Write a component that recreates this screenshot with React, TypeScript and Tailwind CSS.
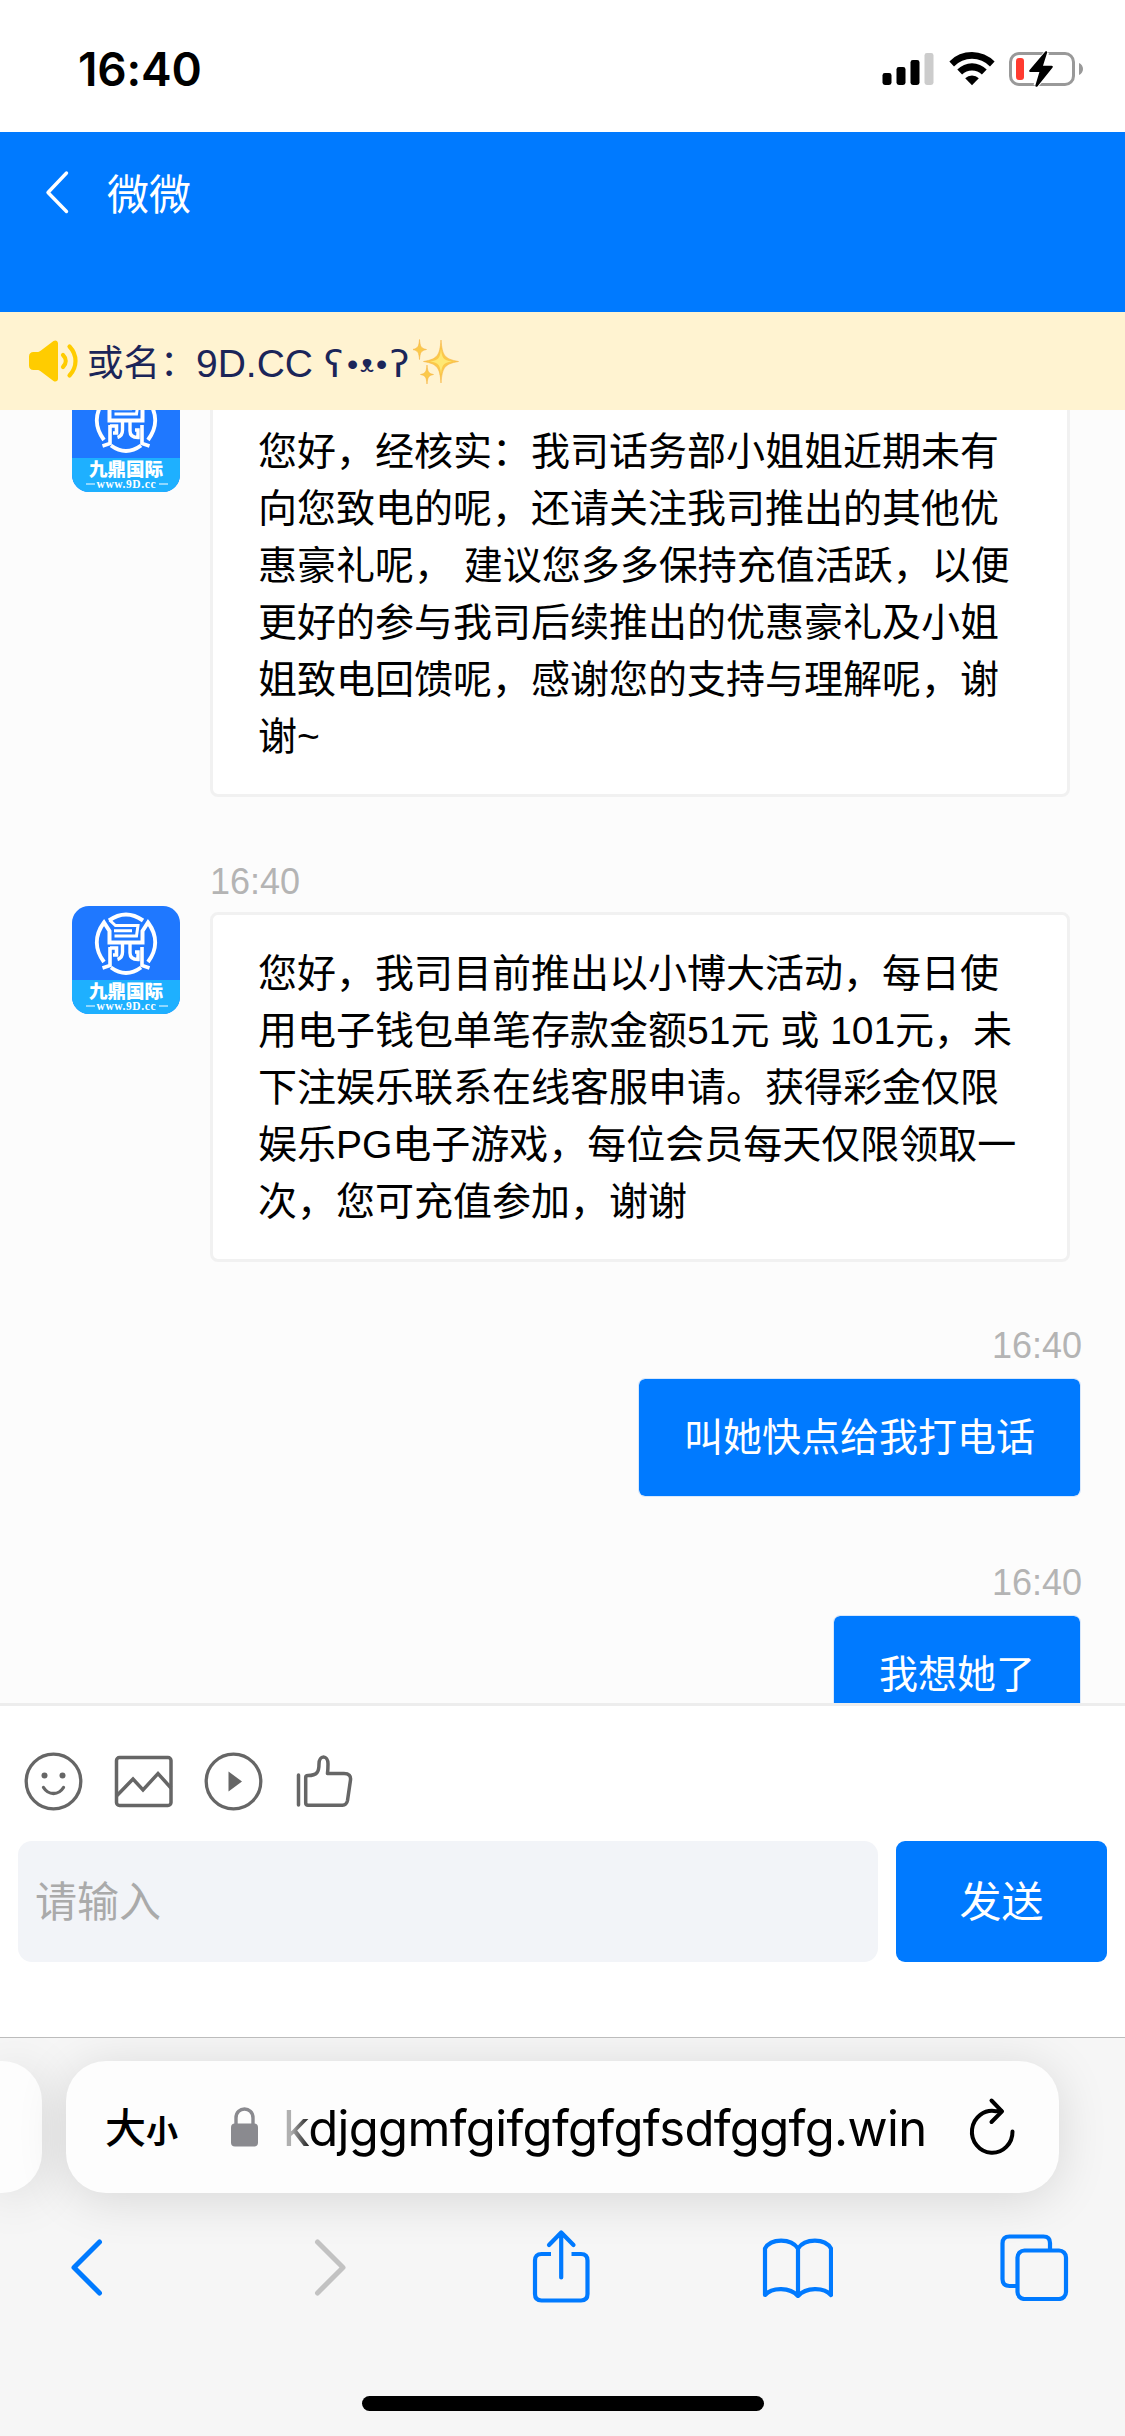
import React from "react";

const SANS = "font-['Liberation_Sans','Noto_Sans_CJK_SC',sans-serif]";

function StatusBar() {
  return (
    <div className="flex h-[132px] shrink-0 items-start justify-between bg-white pl-[78px] pr-[41px] pt-[50px]">
      <div className="font-['Inter',sans-serif] text-[46px] font-semibold leading-[38px] tracking-[-0.2px] text-black">16:40</div>
      <div className="flex items-start">
        <svg className="mt-px" width="52" height="36" viewBox="0 0 52 36">
          <rect x="0.5" y="22" width="9" height="12" rx="2.4" />
          <rect x="14.5" y="16" width="9" height="18" rx="2.4" />
          <rect x="28.5" y="9" width="9" height="25" rx="2.4" />
          <rect x="42.5" y="2" width="9" height="32" rx="2.4" fill="#cccccc" />
        </svg>
        <svg className="ml-[15px]" width="46" height="36" viewBox="0 0 46 36">
          <path d="M0.4 11.4a31.5 31.5 0 0 1 45.2 0.1l-4.6 5a25 25 0 0 0-36 0z" />
          <path d="M8.3 19.5a20.6 20.6 0 0 1 29.4 0l-4.8 5a14 14 0 0 0-19.8 0z" />
          <path d="M16.2 28.2a9.6 9.6 0 0 1 13.6 0L23 35.2z" />
        </svg>
        <svg className="ml-[13px]" width="76" height="38" viewBox="0 0 76 38">
          <rect x="2.5" y="3.5" width="63" height="31" rx="8.5" fill="none" stroke="#999" strokeWidth="3" />
          <rect x="8" y="8" width="8" height="22" rx="3" fill="#ff3b30" />
          <path d="M71 13c2.6 1 4 3.5 4 6s-1.400 5-4 6z" fill="#999" />
          <path d="M38.500 2.500L24 20.500h8l-4 15L44.500 17h-9z" fill="#fff" stroke="#fff" strokeWidth="5" />
          <path d="M37.300 1.600c1.200-.9 2.200-.2 1.800 1.200L35 15.800h8.600c1.400 0 1.600 1 .8 2L29.600 36.300c-1 1-2.600.5-2.200-1L31.400 22h-9c-1.300 0-1.600-1-.8-2z" />
        </svg>
      </div>
    </div>
  );
}

function Notice() {
  return (
    <div className="flex h-[98px] shrink-0 items-center overflow-hidden bg-[#fff3d1] pl-[29px]">
      <svg width="50" height="42" viewBox="0 0 50 42" fill="#ffcc00">
        <path d="M4.500 12H8c1.500 0 2.500-.4 3.600-1.300L24.500 1C26.500-.4 29 .8 29 3.200v35.600c0 2.400-2.500 3.600-4.500 2.200L11.600 31.300C10.500 30.400 9.500 30 8 30H4.500C1.700 30 0 28.300 0 25.500v-9C0 13.700 1.700 12 4.500 12z" />
        <path d="M34 15c3.600 3.600 3.600 8.400 0 12M40.500 6.500c8 8.500 8 20.500 0 29" fill="none" stroke="#ffcc00" strokeWidth="4.200" strokeLinecap="round" />
      </svg>
      <div className="ml-[8px] flex items-center whitespace-pre pt-[6px] text-[36.500px] leading-[56px] text-[#1b2559]">
        <span className="w-[109px]">或名：</span>
        <span className="w-[128px] text-[39px]">9D.CC</span>
        <span className="flex w-[89px] items-center font-['DejaVu_Sans',sans-serif]">
          <span className="w-[23px] text-[38px]">ʕ</span>
          <span className="w-[11px] font-['Liberation_Sans',sans-serif] text-[32px]">•</span>
          <span className="w-[18px] text-center text-[23px]">ᴥ</span>
          <span className="w-[14px] font-['Liberation_Sans',sans-serif] text-[32px]">•</span>
          <span className="text-[38px]">ʔ</span>
        </span>
        <svg className="-mt-[4px]" width="46" height="48" viewBox="0 0 46 48">
          <g fill="#fbc94a" stroke="#f7b545" strokeWidth="0.6">
            <path d="M28 2c1.300 15 3 19 17.500 21.500C31 26 29.300 30 28 45c-1.300-15-3-19-17.500-21.500C25 21 26.700 17 28 2z" />
            <path d="M6.500 1.500c.6 7 1.500 9 7 10-5.500 1-6.400 3-7 10-.6-7-1.500-9-7-10 5.500-1 6.400-3 7-10z" />
            <path d="M14 27c.6 6.500 1.300 8.500 6.500 9.500-5.200 1-5.900 3-6.500 9.500-.6-6.500-1.300-8.500-6.500-9.500 5.200-1 5.900-3 6.500-9.500z" />
          </g>
          <path d="M28 11c.8 8.500 2 11.300 11 12.500-9 1.200-10.200 4-11 12.500-.8-8.500-2-11.300-11-12.500 9-1.200 10.200-4 11-12.500z" fill="#ffe873" />
        </svg>
      </div>
    </div>
  );
}

function Avatar() {
  return (
    <svg className="shrink-0" width="108" height="108" viewBox="0 0 108 108">
      <defs>
        <clipPath id="av"><rect width="108" height="108" rx="17" /></clipPath>
      </defs>
      <g clipPath="url(#av)">
        <rect width="108" height="108" fill="#1f78ff" />
        <rect y="74" width="108" height="34" fill="#1eb0ff" />
      </g>
      <g fill="none" stroke="#fff" strokeWidth="4">
        <path d="M37 14.500Q54 2.500 71 14.500" />
        <path d="M39 61.500Q54 72.500 69 61.500" />
        <path d="M32 56C23 44 22 30 32 16.500L37.500 25V36.500H70.500V25L76 16.500C86 30 85 44 76 56" />
        <path d="M37.500 14L43.500 19.500H66L64.500 30H42.500M42 24.800H60" strokeWidth="3" />
        <path d="M50.500 38v8q0 6-5 7.500M58 38v9q0 6.500 8 6.500V46h-3" strokeWidth="3.400" />
        <path d="M38 42h6.500v7H41M38 41V59.500L30.500 62M70 41V59.500L77.500 62" strokeWidth="3.600" />
      </g>
      <text x="54" y="92" textAnchor="middle" textLength="74" fill="#fff" className="font-['Noto_Sans_CJK_SC',sans-serif] text-[18.500px] font-black">九鼎国际</text>
      <text x="54" y="103.500" textAnchor="middle" textLength="59" fill="#fff" className="font-['Liberation_Serif',serif] text-[11.500px] font-bold">www.9D.cc</text>
      <path d="M14 100h9M87 100h9" stroke="#fff" strokeWidth="1" />
    </svg>
  );
}

function Incoming({ lines }: { lines: string[] }) {
  return (
    <div className="flex items-start pl-[72px]">
      <Avatar />
      <div className="ml-[30px] mt-[6px] w-[860px] rounded-[8px] border-[3px] border-[#f1f1f1] bg-white px-[45px] pb-[29px] pt-[30px] text-[39px] leading-[57px] text-black">
        {lines.map((line) => (
          <div key={line} className="whitespace-pre">{line}</div>
        ))}
      </div>
    </div>
  );
}

function Outgoing({ text }: { text: string }) {
  return (
    <div className="flex flex-col items-end pr-[43px]">
      <div className="h-[54px] text-[36px] leading-[54px] text-[#b4b4b4]">16:40</div>
      <div className="mr-px mt-[5px] flex h-[119px] items-center rounded-[7px] border border-[#d9e8fb] bg-[#007aff] bg-clip-padding px-[45px] text-[39px] leading-[57px] text-white">
        {text}
      </div>
    </div>
  );
}

function Chat() {
  return (
    <div className="flex h-[1293px] shrink-0 flex-col overflow-hidden bg-[#fcfcfc]">
      <div className="-mt-[26px]">
        <Incoming
          lines={[
            "您好，经核实：我司话务部小姐姐近期未有",
            "向您致电的呢，还请关注我司推出的其他优",
            "惠豪礼呢， 建议您多多保持充值活跃，以便",
            "更好的参与我司后续推出的优惠豪礼及小姐",
            "姐致电回馈呢，感谢您的支持与理解呢，谢",
            "谢~",
          ]}
        />
      </div>
      <div className="ml-[210px] mt-[57px] h-[52px] text-[36px] leading-[55px] text-[#b4b4b4]">16:40</div>
      <Incoming
        lines={[
          "您好，我司目前推出以小博大活动，每日使",
          "用电子钱包单笔存款金额51元 或 101元，未",
          "下注娱乐联系在线客服申请。获得彩金仅限",
          "娱乐PG电子游戏，每位会员每天仅限领取一",
          "次，您可充值参加，谢谢",
        ]}
      />
      <div className="mt-[57px] flex flex-col gap-[59px]">
        <Outgoing text="叫她快点给我打电话" />
        <Outgoing text="我想她了" />
      </div>
    </div>
  );
}

function Composer() {
  return (
    <div className="flex h-[334px] shrink-0 flex-col border-t-[3px] border-[#ededed] bg-white pl-[18px] pr-[18px] pt-[46px]">
      <div className="flex h-[60px] items-center gap-[30px] pl-[5px]">
        <svg width="60" height="60" viewBox="0 0 60 60" fill="none" stroke="#666" strokeWidth="3.300">
          <circle cx="30.500" cy="29.500" r="27.300" />
          <path d="M20.500 35.500c5 8 15 8 20 0" strokeLinecap="round" />
          <circle cx="21.500" cy="23.500" r="3" fill="#666" stroke="none" />
          <circle cx="39.500" cy="23.500" r="3" fill="#666" stroke="none" />
        </svg>
        <svg width="60" height="60" viewBox="0 0 60 60" fill="none" stroke="#666" strokeWidth="3.500">
          <rect x="3.500" y="5.500" width="54.500" height="48" rx="3" />
          <path d="M4 43.500L20 27l10 11 15-16.500L58 36" />
        </svg>
        <svg width="60" height="60" viewBox="0 0 60 60" fill="none" stroke="#666" strokeWidth="3.300">
          <circle cx="30.500" cy="29.500" r="27.300" />
          <path d="M25.500 19.500L39 29.500l-13.500 10z" fill="#666" stroke="none" />
        </svg>
        <svg width="60" height="60" viewBox="0 0 60 60" fill="none" stroke="#666" strokeWidth="3.500" strokeLinejoin="round">
          <path d="M5.500 23V53" strokeLinecap="round" />
          <path d="M12.700 25.500Q12.700 23.500 15 23.500C24 23.500 26 20 26 12C26 2.500 35 2.500 35 12Q35 17 34.500 21.500H51C56 21.500 58 24 57.500 28L54.500 48.500Q53.500 53.200 49.500 53.200H15Q12.700 53.200 12.700 51Z" />
        </svg>
      </div>
      <div className="mt-[29px] flex h-[121px] gap-[18px]">
        <div className="flex flex-1 items-center rounded-[14px] bg-[#f2f4f8] pl-[17px] pt-[2px] text-[42px] leading-[60px] text-[#aaaaaa]">请输入</div>
        <div className="flex w-[211px] items-center justify-center rounded-[9px] bg-[#007aff] pt-[2px] text-[42px] leading-[60px] text-white">发送</div>
      </div>
    </div>
  );
}

function BrowserBar() {
  return (
    <div className="relative flex h-[399px] shrink-0 flex-col overflow-hidden border-t border-[#bcbcbc] bg-[#f6f6f6]">
      <div className="mt-[23px] flex h-[132px] items-stretch gap-[24px]">
        <div className="w-[42px] shrink-0 rounded-r-[40px] bg-[#fdfdfd] shadow-[0_6px_50px_rgba(0,0,0,0.13)]" />
        <div className="flex w-[993px] shrink-0 items-center rounded-[40px] bg-[#fdfdfd] pl-[39px] shadow-[0_6px_50px_rgba(0,0,0,0.13)]">
          <div className="flex w-[126px] items-baseline font-['Noto_Sans_CJK_SC',sans-serif] leading-[60px] text-black">
            <span className="text-[41px] font-medium">大</span>
            <span className="text-[32px] font-bold">小</span>
          </div>
          <svg width="27" height="40" viewBox="0 0 27 40">
            <rect y="16.500" width="27" height="23" rx="4" fill="#8a8a8f" />
            <path d="M5 18V11C5 -1 22 -1 22 11v7" fill="none" stroke="#8a8a8f" strokeWidth="3.400" />
          </svg>
          <div className="ml-[25px] w-[645px] whitespace-nowrap pt-[3px] font-['Inter',sans-serif] text-[49px] leading-[60px] tracking-[-0.650px] text-black [mask-image:linear-gradient(90deg,rgba(0,0,0,0.3)_8px,#000_30px)]">
            kdjggmfgifgfgfgfsdfggfg.win
          </div>
          <svg className="-mt-[3px] ml-[38px]" width="54" height="60" viewBox="0 0 54 60" fill="none" stroke="#000" strokeWidth="4" strokeLinecap="round" strokeLinejoin="round">
            <path d="M46.500 35.500A20.300 21 0 1 1 30 15.200Q33 14.700 35.500 15.300" />
            <path d="M25.500 4.500L36 15.300 25.500 26" />
          </svg>
        </div>
      </div>
      <div className="mt-[36px] flex h-[76px] items-center justify-between pl-[68px] pr-[55px]">
        <svg width="36" height="60" viewBox="0 0 36 60" fill="none" stroke="#007aff" strokeWidth="5" strokeLinecap="round" strokeLinejoin="round">
          <path d="M31.500 5L6 30.500 31.500 56" />
        </svg>
        <svg className="ml-[42px]" width="36" height="60" viewBox="0 0 36 60" fill="none" stroke="#c2c2c2" strokeWidth="5" strokeLinecap="round" strokeLinejoin="round">
          <path d="M5.500 5L31 30.500 5.500 56" />
        </svg>
        <svg className="ml-[18px]" width="60" height="76" viewBox="0 0 60 76" fill="none" stroke="#007aff" strokeWidth="4.200">
          <path d="M20 25H10.500Q4 25 4 31.500V65Q4 71.500 10.500 71.500H50Q56.500 71.500 56.500 65V31.500Q56.500 25 50 25H40.500" />
          <path d="M30.200 48.500V4M18 16L30.200 3.500 42.500 16" strokeLinecap="round" strokeLinejoin="round" />
        </svg>
        <svg className="ml-[4px]" width="72" height="62" viewBox="0 0 72 62" fill="none" stroke="#007aff" strokeWidth="4.200" strokeLinejoin="round" strokeLinecap="round">
          <path d="M37 12.500C30 2 10 2 4 12.500V59C11 51 29 51 37 60C45 51 63 51 70 59V12.500C64 2 44 2 37 12.500V59" />
        </svg>
        <svg width="72" height="68" viewBox="0 0 72 68" fill="none" stroke="#007aff" strokeWidth="4.200">
          <path d="M19 53H11.500Q4.500 53 4.500 46V10.500Q4.500 3.500 11.500 3.500H45.500Q52 3.500 52 10V17" />
          <rect x="19.500" y="17.500" width="48.500" height="48.500" rx="7" />
        </svg>
      </div>
      <div className="mx-auto mt-[91px] h-[15px] w-[402px] shrink-0 rounded-full bg-black" />
    </div>
  );
}

export default function App() {
  return (
    <div className={`flex h-[2436px] w-[1125px] flex-col overflow-hidden bg-white ${SANS}`}>
      <StatusBar />
      <header className="flex h-[180px] shrink-0 items-start bg-[#007aff] pl-[45px] pt-[30px]">
        <svg className="mt-[8px]" width="24" height="44" viewBox="0 0 24 44" fill="none" stroke="#fff" strokeWidth="3.400" strokeLinecap="round" strokeLinejoin="round">
          <path d="M21.500 3L3 22.500 21.500 41.500" />
        </svg>
        <h1 className="ml-[38px] mt-[4px] text-[42px] font-normal leading-[60px] text-white">微微</h1>
      </header>
      <Notice />
      <Chat />
      <Composer />
      <BrowserBar />
    </div>
  );
}
